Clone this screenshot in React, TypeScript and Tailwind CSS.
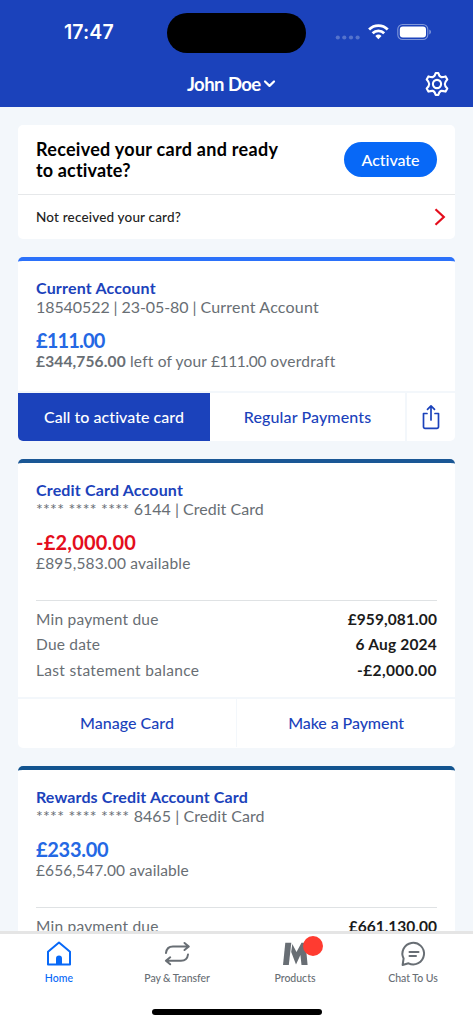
import React from "react";

type Row = { label: string; value: string; labelTrack: string; valueTrack: string };

function StatusBar() {
  return (
    <div className="flex h-[65px] items-start">
      <div className="w-[167px] pl-[64px] pt-[20px] font-['Inter'] text-[19.5px] leading-[25px] font-semibold tracking-[0.1px] text-white">17:47</div>
      <div className="mt-[13px] h-[40px] w-[139px] rounded-full bg-black" />
      <svg className="ml-[29px] mt-[20px]" width="100" height="24" viewBox="335 20 100 24">
        <g fill="#5573cc">
          <circle cx="337.8" cy="37.5" r="2.1" />
          <circle cx="344.3" cy="37.5" r="2.1" />
          <circle cx="351" cy="37.5" r="2.1" />
          <circle cx="357.6" cy="37.5" r="2.1" />
        </g>
        <g fill="none" stroke="#fff" strokeWidth="2.8">
          <path d="M369.1 29.4a13.2 13.2 0 0 1 18.6 0" />
          <path d="M372.6 33.2a8.3 8.3 0 0 1 11.6 0" />
        </g>
        <path d="M378.4 39.2l-3.1-3.2a4.5 4.5 0 0 1 6.2 0z" fill="#fff" />
        <rect x="397.8" y="24.5" width="30" height="15" rx="4.8" fill="none" stroke="#8097da" strokeWidth="1.1" />
        <rect x="399.8" y="26.5" width="26.2" height="11" rx="3" fill="#fff" />
        <path d="M429.3 29.6c2.2.7 2.2 4.1 0 4.8z" fill="#8097da" />
      </svg>
    </div>
  );
}

function Header() {
  return (
    <header className="h-[107px] shrink-0 bg-[#1b42bb]">
      <StatusBar />
      <div className="flex h-[38px] items-center pl-[187px] pr-[23px]">
        <div className="w-[74px] whitespace-nowrap text-[18.5px] leading-[24px] font-bold tracking-[-0.55px] text-white">John Doe</div>
        <svg className="ml-[2px]" width="13" height="10" viewBox="0 0 13 10" fill="none" stroke="#fff" strokeWidth="2.2" strokeLinecap="round" strokeLinejoin="round">
          <path d="M2 2.500l4.500 4.400L11 2.500" />
        </svg>
        <svg className="ml-auto" width="26" height="26" viewBox="-13 -13 26 26" fill="none" stroke="#fff" strokeWidth="2.1" strokeLinejoin="round">
          <circle r="4.1" />
          <path d="M-1.300 -11h2.600Q2.300 -7.300 4.300 -6.900Q5.500 -6.700 8.600 -7.600L10.300 -4.500Q7.800 -2 7.800 0Q7.800 2 10.300 4.500L8.600 7.600Q5.500 6.700 4.300 6.900Q2.300 7.300 1.300 11h-2.600Q-2.300 7.300 -4.300 6.900Q-5.500 6.700 -8.600 7.600L-10.300 4.500Q-7.800 2 -7.800 0Q-7.800 -2 -10.300 -4.500L-8.600 -7.600Q-5.500 -6.700 -4.300 -6.900Q-2.300 -7.300 -1.300 -11z" />
        </svg>
      </div>
    </header>
  );
}

function ActivateCard() {
  return (
    <section className="mt-[18px] h-[114px] shrink-0 rounded-[5px] bg-white">
      <div className="flex h-[70px] items-center justify-between border-b-[1.5px] border-[#e6e8ea] px-[18px]">
        <h2 className="whitespace-nowrap text-[18px] leading-[21px] font-bold text-black">
          <span className="tracking-[0.28px]">Received your card and ready</span>
          <br />
          <span className="tracking-[0.15px]">to activate?</span>
        </h2>
        <button className="h-[35px] w-[93px] rounded-full bg-[#0768f7] text-[16px] font-medium tracking-[-0.05px] text-white">Activate</button>
      </div>
      <div className="flex h-[44px] items-center justify-between pl-[18px] pr-[9px] text-[13.5px] text-[#222]">
        <span className="font-medium tracking-[0.18px]">Not received your card?</span>
        <svg width="12" height="18" viewBox="0 0 12 18" fill="none" stroke="#e40d1c" strokeWidth="2.2">
          <path d="M1.5 1.2L9.8 9L1.5 16.8" />
        </svg>
      </div>
    </section>
  );
}

function AccountHead({ title, sub, balance, balanceClass, children }: {
  title: React.ReactNode; sub: React.ReactNode; balance: string; balanceClass: string; children: React.ReactNode;
}) {
  return (
    <div className="whitespace-nowrap px-[18px] pt-[17px]">
      <h3 className="text-[16px] leading-[19px] font-bold text-[#1b42bb]">{title}</h3>
      <p className="text-[16px] leading-[19px] text-[#686e74]">{sub}</p>
      <p className={"mt-[12px] text-[20px] leading-[24px] font-bold " + balanceClass}>{balance}</p>
      <p className="text-[15.5px] leading-[19px] text-[#686e74]">{children}</p>
    </div>
  );
}

function Rows({ rows }: { rows: Row[] }) {
  return (
    <dl className="mx-[18px] mt-[27px] whitespace-nowrap border-t border-[#dfe2e4] pt-[6px] text-[15.5px] leading-[25.3px]">
      {rows.map((r) => (
        <div key={r.label} className="flex justify-between">
          <dt className={"text-[#686e74] " + r.labelTrack}>{r.label}</dt>
          <dd className={"font-bold text-[#1b1b1b] " + r.valueTrack}>{r.value}</dd>
        </div>
      ))}
    </dl>
  );
}

function Tab({ label, active, track, children }: { label: string; active?: boolean; track: string; children: React.ReactNode }) {
  return (
    <div className={"flex w-[118px] flex-col items-center " + (active ? "text-[#0768f7]" : "text-[#686e74]")}>
      {children}
      <span className={"mt-[3px] whitespace-nowrap text-[10.5px] leading-[14px] font-medium " + track}>{label}</span>
    </div>
  );
}

function TabBar() {
  return (
    <nav className="h-[93px] shrink-0 border-t-[3px] border-[#e5e5e5] bg-white">
      <div className="flex pt-[5px]">
        <Tab label="Home" active track="tracking-[0.05px]">
          <svg width="30" height="29" viewBox="0 0 30 29">
            <path d="M4 12.8L15 3.6L26 12.8V25.400H4z" fill="none" stroke="currentColor" strokeWidth="2" strokeLinejoin="round" />
            <path d="M12 25v-5.500a3 3 0 0 1 6 0v5.500z" fill="currentColor" />
          </svg>
        </Tab>
        <Tab label="Pay & Transfer" track="tracking-[-0.08px]">
          <svg width="30" height="29" viewBox="0 0 30 29" fill="none" stroke="currentColor" strokeWidth="2" strokeLinecap="round" strokeLinejoin="round">
            <path d="M4 14C4.500 9.500 7 7.500 11 7.500H26.500M22.500 4L26.800 7.500L22.500 11" />
            <path d="M26 15.500C25.500 19.500 23 21.800 19 21.800H4M8.200 18.300L3.900 21.800L8.200 25.300" />
          </svg>
        </Tab>
        <Tab label="Products" track="tracking-[0px]">
          <div className="relative h-[29px] w-[30px]">
            <svg width="30" height="29" viewBox="0 0 30 29" fill="currentColor">
              <path d="M5.300 3.800H11.300L8.800 26H3z" />
              <path d="M12.300 5L16.500 13L21.500 3.800H25.500L27.600 26H21.500L20.400 16L16 25.600L11.200 13z" />
            </svg>
            <span className="absolute -top-[3px] left-[23px] size-[20px] rounded-full bg-[#ff3b30]" />
          </div>
        </Tab>
        <Tab label="Chat To Us" track="tracking-[-0.05px]">
          <svg width="30" height="29" viewBox="0 0 30 29" fill="none" stroke="currentColor" strokeWidth="2" strokeLinecap="round" strokeLinejoin="round">
            <path d="M4.600 26L5.600 19.500A10.800 10.800 0 1 1 10.500 24.300z" />
            <path d="M11.500 13H20.500M11.500 17H18" />
          </svg>
        </Tab>
      </div>
      <div className="mx-auto mt-[24px] h-[5.5px] w-[170px] rounded-full bg-black" />
    </nav>
  );
}

export default function App() {
  return (
    <div className="flex h-[1024px] w-[473px] flex-col overflow-hidden bg-[#f3f7fb] font-['Lato',sans-serif]">
      <Header />
      <main className="flex min-h-0 flex-1 flex-col overflow-hidden px-[18px]">
        <ActivateCard />
        <section className="mt-[18px] flex h-[184px] shrink-0 flex-col overflow-hidden rounded-[5px] border-t-[4.5px] border-[#2b71fa] bg-white">
          <AccountHead
            title={<span className="tracking-[0.18px]">Current Account</span>}
            sub={<><span className="tracking-[-0.08px]">18540522 | 23-05-80 | </span><span className="tracking-[0.19px]">Current Account</span></>}
            balance="£111.00"
            balanceClass="tracking-[-0.85px] text-[#2468e4]"
          >
            <b className="tracking-[0.15px]">£344,756.00</b>
            <span className="tracking-[0.18px]"> left of your </span>
            <span className="tracking-[-0.35px]">£111.00</span>
            <span className="tracking-[0.28px]"> overdraft</span>
          </AccountHead>
          <div className="mt-auto flex h-[50px] shrink-0 border-t-2 border-[#f3f7fb] text-[16px] font-medium">
            <button className="w-[192px] bg-[#1b42bb] tracking-[0.05px] text-white">Call to activate card</button>
            <button className="flex-1 tracking-[0.13px] text-[#1b42bb]">Regular Payments</button>
            <button className="flex w-[50px] items-center justify-center border-l-2 border-[#f3f7fb]">
              <svg width="18" height="26" viewBox="0 0 18 26" fill="none" stroke="#1b42bb" strokeWidth="1.7" strokeLinecap="round" strokeLinejoin="round">
                <path d="M5 9.500H1.500V22.800a1.500 1.500 0 0 0 1.500 1.500H15a1.500 1.500 0 0 0 1.500-1.500V9.500H13M9 16V1.800M5.500 5.300L9 1.800L12.500 5.300" />
              </svg>
            </button>
          </div>
        </section>
        <section className="mt-[18px] flex h-[289px] shrink-0 flex-col overflow-hidden rounded-[5px] border-t-[4.5px] border-[#1a5795] bg-white">
          <AccountHead
            title={<span className="tracking-[0.17px]">Credit Card Account</span>}
            sub={<><span className="tracking-[0.25px]">**** **** **** </span><span className="tracking-[0.02px]">6144 | Credit Card</span></>}
            balance="-£2,000.00"
            balanceClass="tracking-[0.2px] text-[#e40d1c]"
          >
            <span className="tracking-[0.18px]">£895,583.00 available</span>
          </AccountHead>
          <Rows
            rows={[
              { label: "Min payment due", value: "£959,081.00", labelTrack: "tracking-[0.22px]", valueTrack: "tracking-[0.1px]" },
              { label: "Due date", value: "6 Aug 2024", labelTrack: "tracking-[0.22px]", valueTrack: "tracking-[0.2px]" },
              { label: "Last statement balance", value: "-£2,000.00", labelTrack: "tracking-[0.32px]", valueTrack: "tracking-[0.4px]" },
            ]}
          />
          <div className="mt-auto flex h-[51px] shrink-0 border-t-2 border-[#f3f7fb] pb-[1px] text-[16px] font-medium text-[#1b42bb]">
            <button className="w-[218px] tracking-[0.02px]">Manage Card</button>
            <button className="flex-1 border-l-[1.5px] border-[#f3f7fb] tracking-[-0.08px]">Make a Payment</button>
          </div>
        </section>
        <section className="mt-[17.5px] h-[289px] shrink-0 overflow-hidden rounded-[5px] border-t-[4.5px] border-[#12548f] bg-white">
          <AccountHead
            title={<span className="tracking-[0.12px]">Rewards Credit Account Card</span>}
            sub={<><span className="tracking-[0.25px]">**** **** **** </span><span className="tracking-[0.07px]">8465 | Credit Card</span></>}
            balance="£233.00"
            balanceClass="tracking-[-0.3px] text-[#2468e4]"
          >
            <span className="tracking-[0.1px]">£656,547.00 available</span>
          </AccountHead>
          <Rows rows={[{ label: "Min payment due", value: "£661,130.00", labelTrack: "tracking-[0.22px]", valueTrack: "tracking-[0px]" }]} />
        </section>
      </main>
      <TabBar />
    </div>
  );
}
